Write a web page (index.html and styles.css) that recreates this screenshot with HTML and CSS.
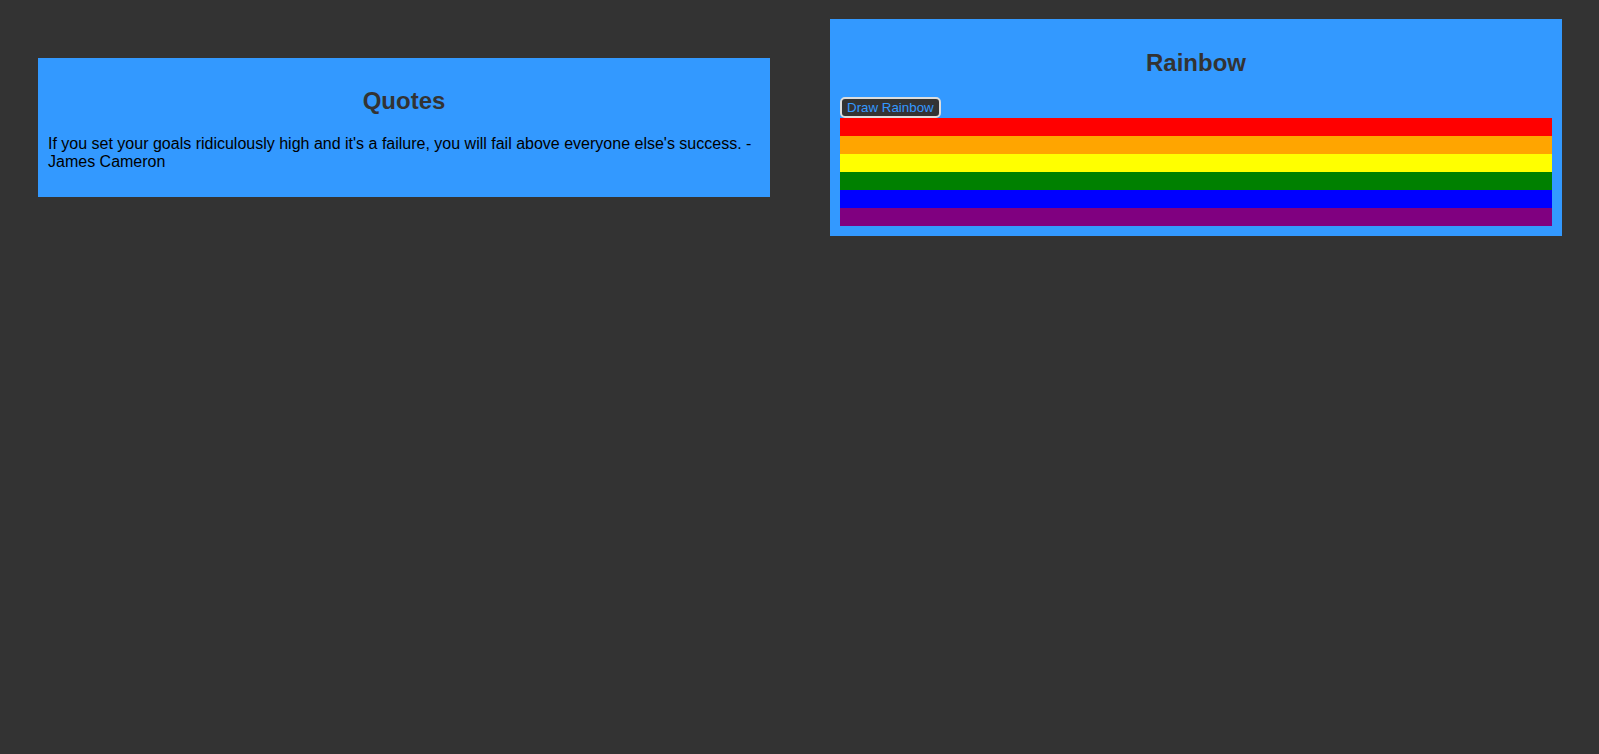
FILE: index.html
```html
<!DOCTYPE html>
<html>
<head>
<meta charset="utf-8">
<link rel="stylesheet" href="styles.css">
</head>
<body>
<div class="page">
  <section class="card">
    <h2 class="card-title">Quotes</h2>
    <p class="quote">If you set your goals ridiculously high and it's a failure, you will fail above everyone else's success. - James Cameron</p>
  </section>
  <section class="card">
    <h2 class="card-title">Rainbow</h2>
    <button class="draw-btn">Draw Rainbow</button>
    <div class="rainbow">
      <div class="stripe red"></div>
      <div class="stripe orange"></div>
      <div class="stripe yellow"></div>
      <div class="stripe green"></div>
      <div class="stripe blue"></div>
      <div class="stripe purple"></div>
    </div>
  </section>
</div>
</body>
</html>
```
FILE: styles.css
```css
html, body {
  margin: 0;
  padding: 0;
  background: #333333;
  font-family: "Liberation Sans", Arial, sans-serif;
}
.page {
  display: flex;
  align-items: center;
  gap: 60px;
  padding: 19px 0 0 38px;
}
.card {
  box-sizing: border-box;
  width: 732px;
  background: #3399ff;
  padding: 10px;
}
.card-title {
  font-size: 24px;
  font-weight: bold;
  color: #333333;
  text-align: center;
  margin: 19.92px 0;
}
.quote {
  font-size: 16px;
  color: #000;
  margin: 16px 0;
}
.draw-btn {
  display: block;
  font-family: "Liberation Sans", Arial, sans-serif;
  font-size: 13.33px;
  color: #3399ff;
  background: #333333;
  border: 2px solid #dddddd;
  border-radius: 5px;
  padding: 1px 5px;
  margin: 0;
}
.rainbow {
  display: flex;
  flex-direction: column;
}
.stripe { height: 18px; }
.red { background: #ff0000; }
.orange { background: #ffa500; }
.yellow { background: #ffff00; }
.green { background: #008000; }
.blue { background: #0000ff; }
.purple { background: #800080; }
```
